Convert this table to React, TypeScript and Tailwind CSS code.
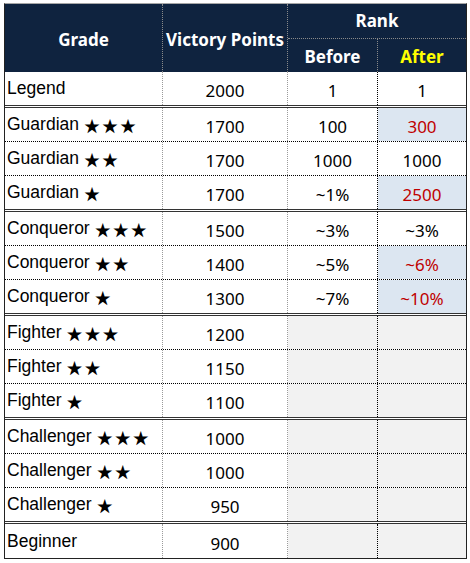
type Row = {
  name: string;
  stars: number;
  vp: string;
  before?: string;
  after?: string;
  afterHi?: boolean;
  gray?: boolean;
  last?: boolean;
};

const rows: Row[] = [
  { name: 'Legend', stars: 0, vp: '2000', before: '1', after: '1', last: true },
  { name: 'Guardian', stars: 3, vp: '1700', before: '100', after: '300', afterHi: true },
  { name: 'Guardian', stars: 2, vp: '1700', before: '1000', after: '1000' },
  { name: 'Guardian', stars: 1, vp: '1700', before: '~1%', after: '2500', afterHi: true, last: true },
  { name: 'Conqueror', stars: 3, vp: '1500', before: '~3%', after: '~3%' },
  { name: 'Conqueror', stars: 2, vp: '1400', before: '~5%', after: '~6%', afterHi: true },
  { name: 'Conqueror', stars: 1, vp: '1300', before: '~7%', after: '~10%', afterHi: true, last: true },
  { name: 'Fighter', stars: 3, vp: '1200', gray: true },
  { name: 'Fighter', stars: 2, vp: '1150', gray: true },
  { name: 'Fighter', stars: 1, vp: '1100', gray: true, last: true },
  { name: 'Challenger', stars: 3, vp: '1000', gray: true },
  { name: 'Challenger', stars: 2, vp: '1000', gray: true },
  { name: 'Challenger', stars: 1, vp: '950', gray: true, last: true },
  { name: 'Beginner', stars: 0, vp: '900', gray: true },
];

function BodyRow({ row, isEnd }: { row: Row; isEnd: boolean }) {
  // row borders: dotted inside a group, double between groups
  const border = isEnd
    ? 'h-[34px]'
    : row.last
      ? 'h-[36px] border-b-[3px] border-double border-[#333]'
      : 'h-[34px] border-b border-dotted border-black';

  return (
    <div className={`flex ${border}`}>
      <div className="w-[158px] flex items-center pl-[2px] border-r border-dotted border-[#9a9a9a] font-['Liberation_Sans',Arial,sans-serif] text-[17.5px] text-black">
        <span>{row.name}</span>
        {row.stars > 0 && (
          <span className="ml-[5px] font-['Noto_Sans_CJK_KR',sans-serif] text-[16px] tracking-[2px] leading-none">
            {'★'.repeat(row.stars)}
          </span>
        )}
      </div>
      <div className="w-[125px] flex items-center justify-center pt-[5px] border-r border-dotted border-[#9a9a9a] text-[17px]">
        {row.vp}
      </div>
      <div
        className={`w-[90px] flex items-center justify-center pt-[5px] border-r border-dotted border-black text-[17px] ${row.gray ? 'bg-[#f2f2f2]' : ''}`}
      >
        {row.before}
      </div>
      <div
        className={`w-[88px] flex items-center justify-center pt-[5px] text-[17px] ${row.gray ? 'bg-[#f2f2f2]' : ''} ${row.afterHi ? 'bg-[#dce6f1] text-[#c00000]' : ''}`}
      >
        {row.after}
      </div>
    </div>
  );
}

export default function App() {
  return (
    <div className="w-[470px] h-[563px] bg-white pl-[4px] pt-[3px] font-['Noto_Sans',sans-serif] text-black">
      <div className="w-[463px] border-x border-b border-[#222] border-t border-t-[#a6a6a6]">
        {/* Header */}
        <div className="flex h-[68px] bg-[#0f233f] text-white font-bold text-[17px]">
          <div className="w-[158px] flex items-center justify-center pt-[4px] border-r border-dotted border-[#8a8a8a]">
            Grade
          </div>
          <div className="w-[125px] flex items-center justify-center pt-[4px] border-r border-dotted border-[#8a8a8a] whitespace-nowrap">
            Victory Points
          </div>
          <div className="w-[178px] flex flex-col">
            <div className="h-[35px] flex items-center justify-center border-b border-dotted border-[#8a8a8a]">
              Rank
            </div>
            <div className="flex flex-1">
              <div className="w-[90px] flex items-center justify-center pt-[2px] border-r border-dotted border-[#8a8a8a]">
                Before
              </div>
              <div className="w-[88px] flex items-center justify-center pt-[2px] text-[#ffff00]">
                After
              </div>
            </div>
          </div>
        </div>
        {/* Body */}
        {rows.map((row, i) => (
          <BodyRow key={i} row={row} isEnd={i === rows.length - 1} />
        ))}
      </div>
    </div>
  );
}
